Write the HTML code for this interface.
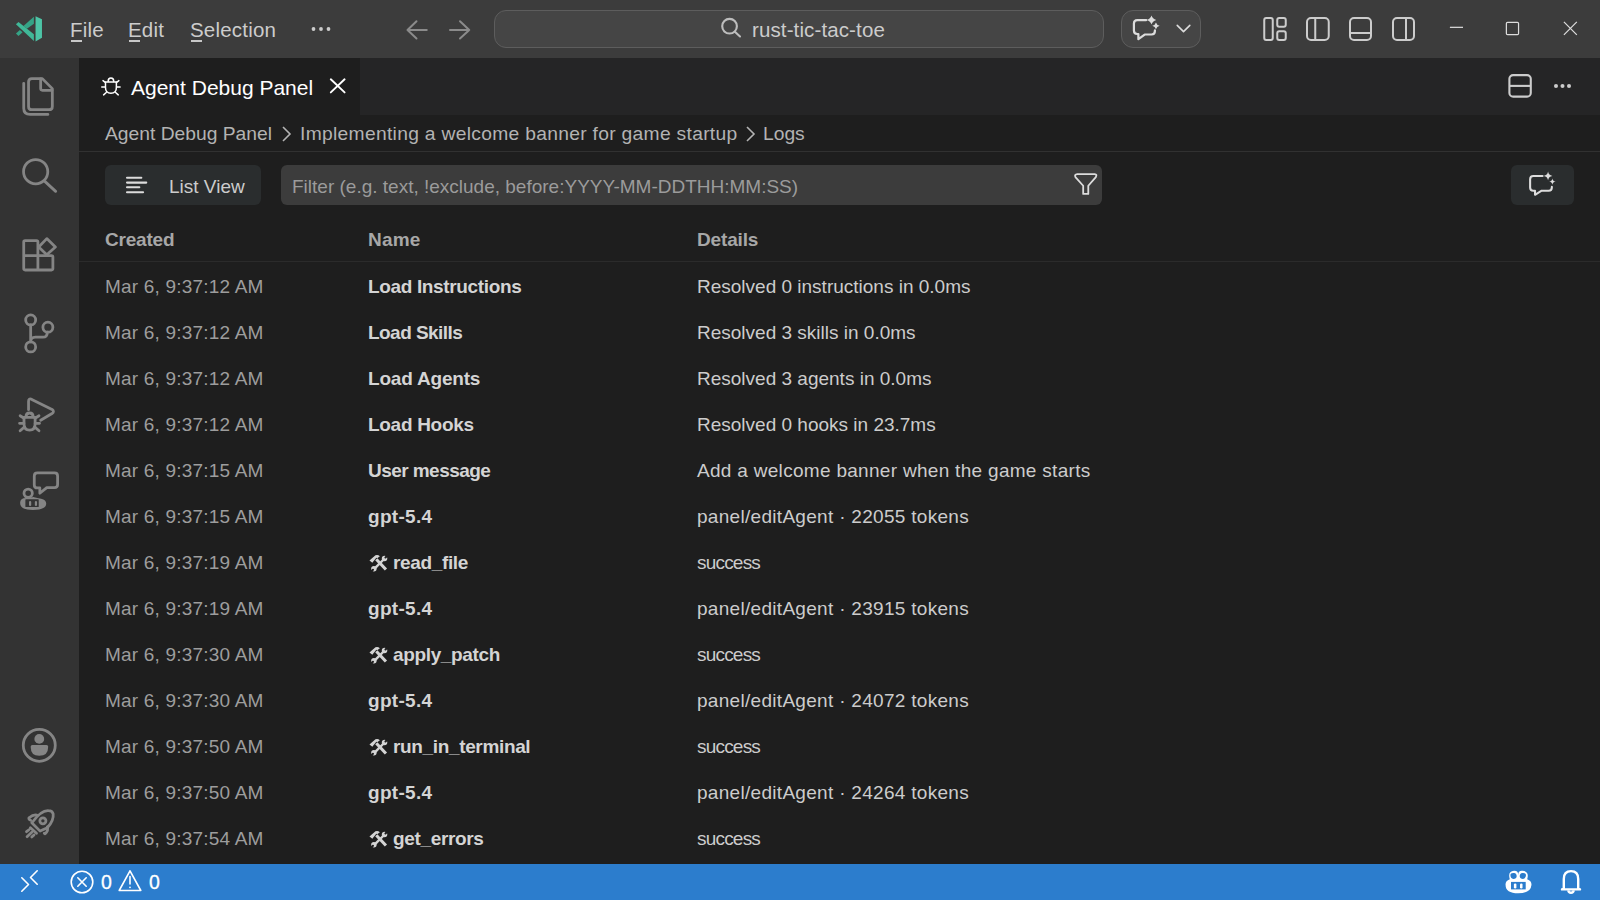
<!DOCTYPE html>
<html><head><meta charset="utf-8"><style>
html,body{margin:0;padding:0;width:1600px;height:900px;overflow:hidden;background:#1e1e1e;font-family:"Liberation Sans",sans-serif;}
.a{position:absolute;white-space:pre;line-height:1;}
svg{position:absolute;overflow:visible;}
.blk{position:absolute;}
</style></head><body>
<div class="blk" style="left:0;top:0;width:1600px;height:58px;background:#3c3c3c"></div>
<div class="blk" style="left:0;top:58px;width:79px;height:806px;background:#333333"></div>
<div class="blk" style="left:79px;top:58px;width:1521px;height:57px;background:#252526"></div>
<div class="blk" style="left:79px;top:58px;width:281px;height:57px;background:#1e1e1e"></div>
<div class="blk" style="left:0;top:864px;width:1600px;height:36px;background:#2c7dcd"></div>
<svg style="left:8px;top:8px" width="42" height="42" viewBox="0 0 900 900" ><polygon points="590,178 728,242 728,640 590,716" fill="#4dc4a6"/><polygon points="330,385 555,190 555,340 405,445" fill="#35a386"/><polygon points="170,545 255,470 312,520 225,598" fill="#35a386"/><polygon points="170,350 225,300 555,560 555,705" fill="#40b898"/></svg>
<div class="a " style="left:70px;top:20.25px;font-size:20.5px;color:#cccccc;letter-spacing:0.2px;">File</div>
<div class="a " style="left:128px;top:20.25px;font-size:20.5px;color:#cccccc;letter-spacing:0.2px;">Edit</div>
<div class="a " style="left:190px;top:20.25px;font-size:20.5px;color:#cccccc;letter-spacing:0.2px;">Selection</div>
<div class="blk" style="left:71px;top:40.3px;width:10.5px;height:1.7px;background:#c8c8c8"></div>
<div class="blk" style="left:129px;top:40.3px;width:11px;height:1.7px;background:#c8c8c8"></div>
<div class="blk" style="left:191px;top:40.3px;width:11px;height:1.7px;background:#c8c8c8"></div>
<svg style="left:308px;top:20px" width="26" height="18" viewBox="0 0 26 18" ><circle cx="5.5" cy="9" r="1.9" fill="#cccccc"/><circle cx="13" cy="9" r="1.9" fill="#cccccc"/><circle cx="20.5" cy="9" r="1.9" fill="#cccccc"/></svg>
<svg style="left:398px;top:10px" width="80" height="40" viewBox="0 0 1600 800" ><g fill="none" stroke="#8b8b8b" stroke-width="40" stroke-linecap="round" stroke-linejoin="round"><path d="M575,400 H190 M370,225 L190,400 L370,570"/><path d="M1040,400 H1425 M1240,225 L1425,400 L1240,570"/></g></svg>
<div class="blk" style="left:494px;top:10px;width:608px;height:36px;border:1px solid #5d5d5d;border-radius:12px;background:#454545"></div>
<svg style="left:712px;top:10px" width="40" height="40" viewBox="0 0 900 900" ><g fill="none" stroke="#bdbdbd" stroke-width="48" stroke-linecap="round"><circle cx="395" cy="365" r="165"/><path d="M515,490 L630,595"/></g></svg>
<div class="a " style="left:752px;top:19.95px;font-size:20.5px;color:#cccccc;letter-spacing:0.12px;">rust-tic-tac-toe</div>
<div class="blk" style="left:1121px;top:10px;width:78px;height:36px;border:1px solid #5d5d5d;border-radius:12px;background:#454545"></div>
<svg style="left:1120px;top:8px" width="84" height="42" viewBox="0 0 1600 800" ><g fill="none" stroke="#dcdcdc" stroke-width="42" stroke-linejoin="round" stroke-linecap="round"><path d="M500,230 H330 Q265,230 265,295 V430 Q265,495 330,495 H350 V595 L470,505 H600 Q665,505 665,440 V425"/></g><path d="M1090,330 L1210,450 L1330,330" fill="none" stroke="#dcdcdc" stroke-width="30" stroke-linecap="round" stroke-linejoin="round"/><path d="M600,145 Q620,210 690,230 Q620,250 600,315 Q580,250 510,230 Q580,210 600,145Z" fill="#dcdcdc"/><path d="M685,275 Q700,325 755,340 Q700,355 685,405 Q670,355 615,340 Q670,325 685,275Z" fill="#dcdcdc"/></svg>
<svg style="left:1256px;top:10px" width="80" height="40" viewBox="0 0 1600 800" ><g fill="none" stroke="#cccccc" stroke-width="40"><rect x="165" y="160" width="170" height="440" rx="40"/><rect x="425" y="160" width="170" height="175" rx="40"/><rect x="425" y="425" width="170" height="175" rx="40"/><rect x="1020" y="160" width="435" height="440" rx="80"/><path d="M1185,160 V600"/></g></svg>
<svg style="left:1340px;top:10px" width="80" height="40" viewBox="0 0 1600 800" ><g fill="none" stroke="#cccccc" stroke-width="40"><rect x="200" y="160" width="420" height="440" rx="80"/><path d="M200,460 H620"/><rect x="1060" y="160" width="420" height="440" rx="80"/><path d="M1320,160 V600"/></g></svg>
<svg style="left:1440px;top:10px" width="150" height="40" viewBox="0 0 1600 427" ><g fill="none" stroke="#dddddd" stroke-width="13"><path d="M105,185 H245"/><rect x="708" y="132" width="130" height="130" rx="12"/><path d="M1322,127 L1460,265 M1460,127 L1322,265"/></g></svg>
<svg style="left:14px;top:70px" width="50" height="50" viewBox="0 0 900 900" ><g fill="none" stroke="#858585" stroke-width="50" stroke-linejoin="round" stroke-linecap="round"><path d="M510,155 H322 Q262,155 262,215 V655 Q262,715 322,715 H630 Q690,715 690,655 V335 Z"/><path d="M480,160 V335 Q480,365 510,365 H685"/><path d="M175,240 V690 Q175,800 290,800 H610"/></g></svg>
<svg style="left:14px;top:150px" width="50" height="50" viewBox="0 0 900 900" ><g fill="none" stroke="#858585" stroke-width="50" stroke-linecap="round"><circle cx="390" cy="390" r="218"/><path d="M555,565 L750,745"/></g></svg>
<svg style="left:14px;top:230px" width="50" height="50" viewBox="0 0 900 900" ><g fill="none" stroke="#858585" stroke-width="50" stroke-linejoin="round"><path d="M430,460 V215 Q430,190 405,190 H200 Q175,190 175,215 V695 Q175,720 200,720 H675 Q700,720 700,695 V485 Q700,460 675,460 H175"/><path d="M430,460 V720"/><path d="M590,155 L745,305 L590,445 L445,305 Z"/></g></svg>
<svg style="left:14px;top:308px" width="50" height="50" viewBox="0 0 900 900" ><g fill="none" stroke="#858585" stroke-width="50" stroke-linecap="round"><circle cx="300" cy="215" r="90"/><circle cx="300" cy="700" r="90"/><circle cx="610" cy="345" r="90"/><path d="M300,305 V610 M300,610 Q300,525 385,525 H520 Q600,525 600,435"/></g></svg>
<svg style="left:14px;top:388px" width="50" height="50" viewBox="0 0 900 900" ><g fill="none" stroke="#858585" stroke-width="50" stroke-linecap="round" stroke-linejoin="round"><path d="M262,390 V240 Q262,180 320,205 L685,385 Q735,425 685,460 L480,580"/><path d="M180,530 H380 V640 Q380,760 280,760 Q180,760 180,640 Z"/><path d="M215,520 Q215,450 280,450 Q345,450 345,520"/><path d="M110,500 L180,545 M450,500 L380,545 M100,635 H180 M460,635 H380 M110,770 L190,700 M450,770 L370,700"/></g></svg>
<svg style="left:14px;top:466px" width="50" height="50" viewBox="0 0 900 900" ><g fill="none" stroke="#858585" stroke-width="50" stroke-linejoin="round" stroke-linecap="round"><path d="M420,125 H730 Q785,125 785,180 V335 Q785,390 730,390 H590 L465,490 V395 H420 Q365,395 365,340 V180 Q365,125 420,125 Z"/><circle cx="255" cy="490" r="75"/></g><path d="M110,660 Q110,570 230,575 Q300,580 345,560 Q420,580 490,590 Q580,610 580,680 Q575,790 340,790 Q110,790 110,660 Z" fill="#858585"/><rect x="205" y="600" width="240" height="140" rx="10" fill="#333333"/><rect x="270" y="630" width="40" height="90" rx="20" fill="#858585"/><rect x="375" y="630" width="40" height="90" rx="20" fill="#858585"/></svg>
<svg style="left:14px;top:720px" width="50" height="50" viewBox="0 0 900 900" ><circle cx="455" cy="455" r="288" fill="none" stroke="#858585" stroke-width="50"/><circle cx="455" cy="340" r="88" fill="#858585"/><path d="M300,480 Q300,450 330,450 H585 Q615,450 615,480 Q615,645 455,645 Q300,645 300,480 Z" fill="#858585"/></svg>
<svg style="left:14px;top:800px" width="50" height="50" viewBox="0 0 900 900" ><g fill="none" stroke="#858585" stroke-width="50" stroke-linejoin="round" stroke-linecap="round"><path d="M320,410 L470,560 L600,500 Q720,370 705,250 Q690,190 620,190 Q490,180 330,400 Z"/><circle cx="520" cy="375" r="55"/><path d="M410,270 Q350,255 270,320 Q260,350 300,365 M600,480 Q625,540 560,610 L545,600"/><path d="M295,500 L405,600 M225,570 L270,535 M235,660 L320,580 M320,665 L360,630"/></g></svg>
<svg style="left:96px;top:72px" width="30" height="28" viewBox="0 0 964 900" ><g fill="none" stroke="#ffffff" stroke-width="48" stroke-linecap="round"><path d="M305,325 H655 V500 Q655,685 480,685 Q305,685 305,500 Z"/><path d="M390,305 Q390,195 480,195 Q570,195 570,305"/><path d="M225,278 L305,340 M735,278 L655,340 M185,485 H300 M775,485 H660 M245,735 L330,660 M715,735 L630,660"/></g></svg>
<div class="a " style="left:131px;top:77.22px;font-size:21px;color:#ffffff;letter-spacing:0px;">Agent Debug Panel</div>
<svg style="left:320px;top:69.3px" width="36" height="34.0" viewBox="0 0 36 34" ><path d="M10.8,10.3 L24.6,23.4 M24.6,10.3 L10.8,23.4" stroke="#ffffff" stroke-width="1.9" stroke-linecap="round"/></svg>
<svg style="left:1480px;top:58px" width="120" height="60" viewBox="0 0 1600 800" ><g fill="none" stroke="#cccccc" stroke-width="28"><rect x="392" y="228" width="285" height="287" rx="50"/><path d="M392,372 H677"/></g><circle cx="1013" cy="373" r="27" fill="#cccccc"/><circle cx="1100" cy="373" r="27" fill="#cccccc"/><circle cx="1187" cy="373" r="27" fill="#cccccc"/></svg>
<div class="a " style="left:105px;top:123.7px;font-size:19.25px;color:#b3b3b3;">Agent Debug Panel</div>
<svg style="left:278px;top:122px" width="20" height="24" viewBox="0 0 20 24" ><path d="M5,5 L12,12 L5,19" fill="none" stroke="#b3b3b3" stroke-width="1.6"/></svg>
<div class="a " style="left:300px;top:123.7px;font-size:19.25px;color:#b3b3b3;letter-spacing:0.3px;">Implementing a welcome banner for game startup</div>
<svg style="left:742px;top:122px" width="20" height="24" viewBox="0 0 20 24" ><path d="M5,5 L12,12 L5,19" fill="none" stroke="#b3b3b3" stroke-width="1.6"/></svg>
<div class="a " style="left:763px;top:123.7px;font-size:19.25px;color:#b3b3b3;">Logs</div>
<div class="blk" style="left:79px;top:151px;width:1521px;height:1px;background:#313131"></div>
<div class="blk" style="left:105px;top:165px;width:156px;height:40px;border-radius:6px;background:#2a2d2e"></div>
<svg style="left:118px;top:170px" width="40" height="30" viewBox="0 0 1200 900" ><g stroke="#dcdcdc" stroke-width="62" stroke-linecap="round"><path d="M270,232 H700 M270,378 H848 M270,520 H640 M270,668 H752"/></g></svg>
<div class="a " style="left:169px;top:176.92px;font-size:19px;color:#cccccc;">List View</div>
<div class="blk" style="left:281px;top:165px;width:821px;height:40px;border-radius:6px;background:#3c3c3c"></div>
<div class="a " style="left:292px;top:177.42px;font-size:19px;color:#9b9b9b;">Filter (e.g. text, !exclude, before:YYYY-MM-DDTHH:MM:SS)</div>
<svg style="left:1066px;top:168px" width="40" height="34" viewBox="0 0 1059 900" ><path d="M300,160 H760 Q830,165 790,240 L590,470 V685 H455 V470 L250,240 Q215,170 300,160 Z" fill="none" stroke="#dcdcdc" stroke-width="48" stroke-linejoin="round"/></svg>
<div class="blk" style="left:1511px;top:165px;width:63px;height:40px;border-radius:6px;background:#2a2d2e"></div>
<svg style="left:1522px;top:168px" width="40" height="34" viewBox="0 0 1059 900" ><g fill="none" stroke="#dcdcdc" stroke-width="55" stroke-linejoin="round" stroke-linecap="round"><path d="M545,210 H300 Q215,210 215,295 V515 Q215,600 300,600 H345 V710 L520,600 H705 Q790,600 790,515 V500"/></g><path d="M690,95 Q705,195 805,210 Q705,225 690,325 Q675,225 575,210 Q675,195 690,95Z" fill="#dcdcdc"/><path d="M805,275 Q815,350 895,360 Q815,370 805,445 Q795,370 715,360 Q795,350 805,275Z" fill="#dcdcdc"/></svg>
<div class="a " style="left:105px;top:229.92px;font-size:19px;color:#a7a7a7;font-weight:700;letter-spacing:-0.2px;">Created</div>
<div class="a " style="left:368px;top:229.92px;font-size:19px;color:#a7a7a7;font-weight:700;letter-spacing:0.2px;">Name</div>
<div class="a " style="left:697px;top:229.92px;font-size:19px;color:#a7a7a7;font-weight:700;letter-spacing:-0.15px;">Details</div>
<div class="blk" style="left:79px;top:261px;width:1521px;height:1px;background:#2b2b2b"></div>
<div class="a " style="left:105px;top:276.72px;font-size:19px;color:#9d9d9d;letter-spacing:0.2px;">Mar 6, 9:37:12 AM</div>
<div class="a " style="left:368px;top:276.72px;font-size:19px;color:#d4d4d4;font-weight:700;letter-spacing:-0.35px;">Load Instructions</div>
<div class="a " style="left:697px;top:276.72px;font-size:19px;color:#cccccc;letter-spacing:0px;">Resolved 0 instructions in 0.0ms</div>
<div class="a " style="left:105px;top:322.72px;font-size:19px;color:#9d9d9d;letter-spacing:0.2px;">Mar 6, 9:37:12 AM</div>
<div class="a " style="left:368px;top:322.72px;font-size:19px;color:#d4d4d4;font-weight:700;letter-spacing:-0.55px;">Load Skills</div>
<div class="a " style="left:697px;top:322.72px;font-size:19px;color:#cccccc;letter-spacing:0px;">Resolved 3 skills in 0.0ms</div>
<div class="a " style="left:105px;top:368.72px;font-size:19px;color:#9d9d9d;letter-spacing:0.2px;">Mar 6, 9:37:12 AM</div>
<div class="a " style="left:368px;top:368.72px;font-size:19px;color:#d4d4d4;font-weight:700;letter-spacing:-0.2px;">Load Agents</div>
<div class="a " style="left:697px;top:368.72px;font-size:19px;color:#cccccc;letter-spacing:0px;">Resolved 3 agents in 0.0ms</div>
<div class="a " style="left:105px;top:414.72px;font-size:19px;color:#9d9d9d;letter-spacing:0.2px;">Mar 6, 9:37:12 AM</div>
<div class="a " style="left:368px;top:414.72px;font-size:19px;color:#d4d4d4;font-weight:700;letter-spacing:-0.3px;">Load Hooks</div>
<div class="a " style="left:697px;top:414.72px;font-size:19px;color:#cccccc;letter-spacing:0px;">Resolved 0 hooks in 23.7ms</div>
<div class="a " style="left:105px;top:460.72px;font-size:19px;color:#9d9d9d;letter-spacing:0.2px;">Mar 6, 9:37:15 AM</div>
<div class="a " style="left:368px;top:460.72px;font-size:19px;color:#d4d4d4;font-weight:700;letter-spacing:-0.55px;">User message</div>
<div class="a " style="left:697px;top:460.72px;font-size:19px;color:#cccccc;letter-spacing:0.3px;">Add a welcome banner when the game starts</div>
<div class="a " style="left:105px;top:506.72px;font-size:19px;color:#9d9d9d;letter-spacing:0.2px;">Mar 6, 9:37:15 AM</div>
<div class="a " style="left:368px;top:506.72px;font-size:19px;color:#d4d4d4;font-weight:700;letter-spacing:0.3px;">gpt-5.4</div>
<div class="a " style="left:697px;top:506.72px;font-size:19px;color:#cccccc;letter-spacing:0.3px;">panel/editAgent · 22055 tokens</div>
<div class="a " style="left:105px;top:552.72px;font-size:19px;color:#9d9d9d;letter-spacing:0.2px;">Mar 6, 9:37:19 AM</div>
<svg style="left:364px;top:548.0px" width="40" height="28.0" viewBox="0 0 1286 900" ><g fill="#d4d4d4"><path d="M175,402 L368,236 Q440,205 512,262 L425,330 L395,312 L268,478 Z"/></g><path d="M395,360 L705,690" stroke="#d4d4d4" stroke-width="98" stroke-linecap="butt"/><path d="M315,690 L655,345" stroke="#d4d4d4" stroke-width="78"/><circle cx="660" cy="335" r="88" fill="#d4d4d4"/><circle cx="318" cy="668" r="88" fill="#d4d4d4"/><path d="M690,305 L770,225" stroke="#1e1e1e" stroke-width="66" stroke-linecap="round"/><path d="M288,698 L208,778" stroke="#1e1e1e" stroke-width="66" stroke-linecap="round"/></svg>
<div class="a " style="left:393px;top:552.72px;font-size:19px;color:#d4d4d4;font-weight:700;letter-spacing:-0.35px;">read_file</div>
<div class="a " style="left:697px;top:552.72px;font-size:19px;color:#cccccc;letter-spacing:-0.8px;">success</div>
<div class="a " style="left:105px;top:598.72px;font-size:19px;color:#9d9d9d;letter-spacing:0.2px;">Mar 6, 9:37:19 AM</div>
<div class="a " style="left:368px;top:598.72px;font-size:19px;color:#d4d4d4;font-weight:700;letter-spacing:0.3px;">gpt-5.4</div>
<div class="a " style="left:697px;top:598.72px;font-size:19px;color:#cccccc;letter-spacing:0.3px;">panel/editAgent · 23915 tokens</div>
<div class="a " style="left:105px;top:644.72px;font-size:19px;color:#9d9d9d;letter-spacing:0.2px;">Mar 6, 9:37:30 AM</div>
<svg style="left:364px;top:640.0px" width="40" height="28.0" viewBox="0 0 1286 900" ><g fill="#d4d4d4"><path d="M175,402 L368,236 Q440,205 512,262 L425,330 L395,312 L268,478 Z"/></g><path d="M395,360 L705,690" stroke="#d4d4d4" stroke-width="98" stroke-linecap="butt"/><path d="M315,690 L655,345" stroke="#d4d4d4" stroke-width="78"/><circle cx="660" cy="335" r="88" fill="#d4d4d4"/><circle cx="318" cy="668" r="88" fill="#d4d4d4"/><path d="M690,305 L770,225" stroke="#1e1e1e" stroke-width="66" stroke-linecap="round"/><path d="M288,698 L208,778" stroke="#1e1e1e" stroke-width="66" stroke-linecap="round"/></svg>
<div class="a " style="left:393px;top:644.72px;font-size:19px;color:#d4d4d4;font-weight:700;letter-spacing:-0.35px;">apply_patch</div>
<div class="a " style="left:697px;top:644.72px;font-size:19px;color:#cccccc;letter-spacing:-0.8px;">success</div>
<div class="a " style="left:105px;top:690.72px;font-size:19px;color:#9d9d9d;letter-spacing:0.2px;">Mar 6, 9:37:30 AM</div>
<div class="a " style="left:368px;top:690.72px;font-size:19px;color:#d4d4d4;font-weight:700;letter-spacing:0.3px;">gpt-5.4</div>
<div class="a " style="left:697px;top:690.72px;font-size:19px;color:#cccccc;letter-spacing:0.3px;">panel/editAgent · 24072 tokens</div>
<div class="a " style="left:105px;top:736.72px;font-size:19px;color:#9d9d9d;letter-spacing:0.2px;">Mar 6, 9:37:50 AM</div>
<svg style="left:364px;top:732.0px" width="40" height="28.0" viewBox="0 0 1286 900" ><g fill="#d4d4d4"><path d="M175,402 L368,236 Q440,205 512,262 L425,330 L395,312 L268,478 Z"/></g><path d="M395,360 L705,690" stroke="#d4d4d4" stroke-width="98" stroke-linecap="butt"/><path d="M315,690 L655,345" stroke="#d4d4d4" stroke-width="78"/><circle cx="660" cy="335" r="88" fill="#d4d4d4"/><circle cx="318" cy="668" r="88" fill="#d4d4d4"/><path d="M690,305 L770,225" stroke="#1e1e1e" stroke-width="66" stroke-linecap="round"/><path d="M288,698 L208,778" stroke="#1e1e1e" stroke-width="66" stroke-linecap="round"/></svg>
<div class="a " style="left:393px;top:736.72px;font-size:19px;color:#d4d4d4;font-weight:700;letter-spacing:-0.35px;">run_in_terminal</div>
<div class="a " style="left:697px;top:736.72px;font-size:19px;color:#cccccc;letter-spacing:-0.8px;">success</div>
<div class="a " style="left:105px;top:782.72px;font-size:19px;color:#9d9d9d;letter-spacing:0.2px;">Mar 6, 9:37:50 AM</div>
<div class="a " style="left:368px;top:782.72px;font-size:19px;color:#d4d4d4;font-weight:700;letter-spacing:0.3px;">gpt-5.4</div>
<div class="a " style="left:697px;top:782.72px;font-size:19px;color:#cccccc;letter-spacing:0.3px;">panel/editAgent · 24264 tokens</div>
<div class="a " style="left:105px;top:828.72px;font-size:19px;color:#9d9d9d;letter-spacing:0.2px;">Mar 6, 9:37:54 AM</div>
<svg style="left:364px;top:824.0px" width="40" height="28.0" viewBox="0 0 1286 900" ><g fill="#d4d4d4"><path d="M175,402 L368,236 Q440,205 512,262 L425,330 L395,312 L268,478 Z"/></g><path d="M395,360 L705,690" stroke="#d4d4d4" stroke-width="98" stroke-linecap="butt"/><path d="M315,690 L655,345" stroke="#d4d4d4" stroke-width="78"/><circle cx="660" cy="335" r="88" fill="#d4d4d4"/><circle cx="318" cy="668" r="88" fill="#d4d4d4"/><path d="M690,305 L770,225" stroke="#1e1e1e" stroke-width="66" stroke-linecap="round"/><path d="M288,698 L208,778" stroke="#1e1e1e" stroke-width="66" stroke-linecap="round"/></svg>
<div class="a " style="left:393px;top:828.72px;font-size:19px;color:#d4d4d4;font-weight:700;letter-spacing:-0.35px;">get_errors</div>
<div class="a " style="left:697px;top:828.72px;font-size:19px;color:#cccccc;letter-spacing:-0.8px;">success</div>
<svg style="left:10px;top:866px" width="160" height="32" viewBox="0 0 1600 320" ><g fill="none" stroke="#ffffff" stroke-width="16" stroke-linecap="round" stroke-linejoin="round"><path d="M118,118 L185,185 L118,252 M272,48 L205,115 L272,182"/><circle cx="720" cy="160" r="108"/><path d="M678,118 L762,202 M762,118 L678,202"/><path d="M1200,48 L1092,245 H1308 Z M1200,105 V180"/></g><circle cx="1200" cy="213" r="9" fill="#ffffff"/></svg>
<div class="a " style="left:101px;top:872.99px;font-size:19.5px;color:#ffffff;font-weight:400;-webkit-text-stroke:0.3px #fff;">0</div>
<div class="a " style="left:149px;top:872.99px;font-size:19.5px;color:#ffffff;font-weight:400;-webkit-text-stroke:0.3px #fff;">0</div>
<svg style="left:1496px;top:866px" width="96" height="32" viewBox="0 0 1600 533" ><path d="M160,320 Q150,250 230,220 Q190,90 300,80 Q370,75 370,150 Q370,75 440,80 Q560,90 520,220 Q600,250 590,320 Q580,450 370,455 Q160,450 160,320 Z" fill="#ffffff"/><path d="M240,150 Q240,110 300,115 Q345,120 345,170 Q340,215 290,215 Q240,210 240,150 Z M395,170 Q395,120 440,115 Q500,110 500,150 Q500,210 450,215 Q400,215 395,170 Z" fill="#2c7dcd"/><rect x="250" y="265" width="245" height="125" fill="#2c7dcd"/><rect x="298" y="290" width="42" height="85" rx="20" fill="#ffffff"/><rect x="400" y="290" width="42" height="85" rx="20" fill="#ffffff"/><g fill="none" stroke="#ffffff" stroke-width="40" stroke-linejoin="round"><path d="M1130,375 V215 Q1130,85 1250,85 Q1370,85 1370,215 V375 L1400,390 H1100 Z"/><path d="M1205,405 Q1210,445 1250,445 Q1290,445 1295,405"/></g></svg>
</body></html>
